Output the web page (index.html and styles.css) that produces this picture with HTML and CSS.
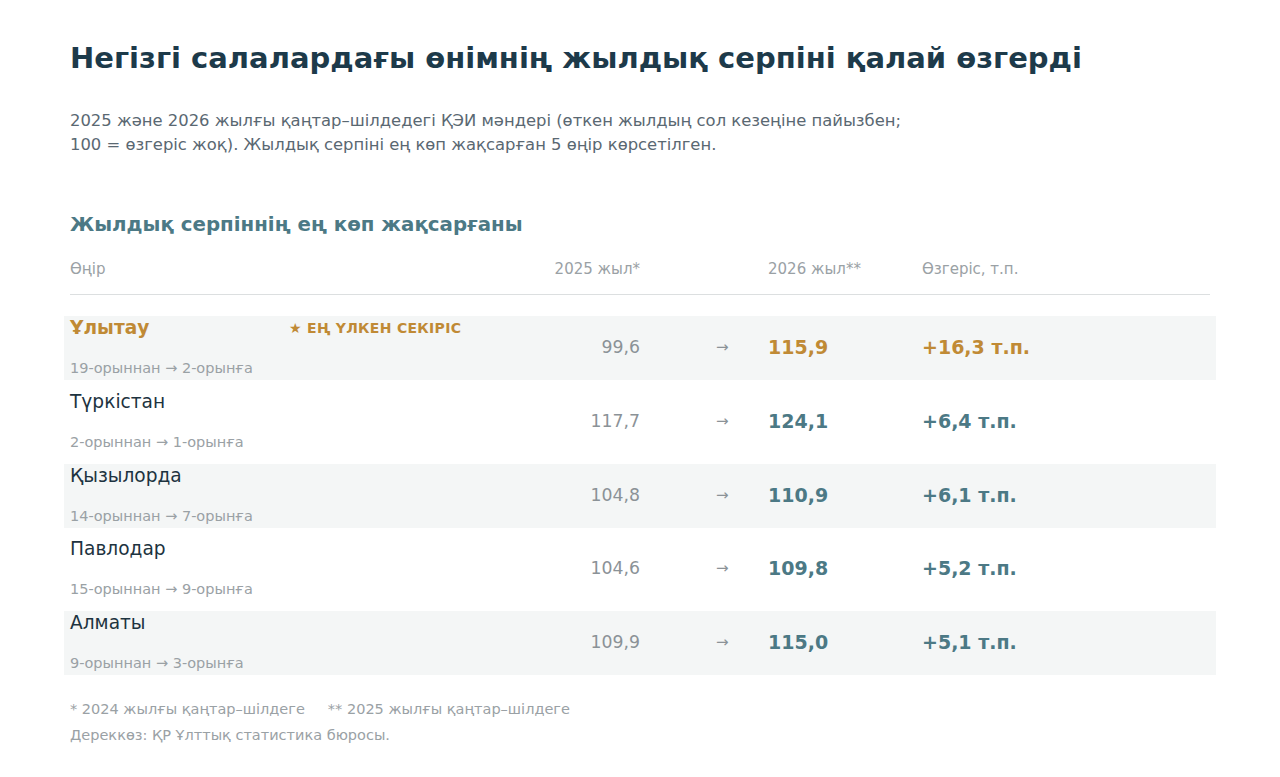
FILE: index.html
```html
<!DOCTYPE html>
<html lang="kk">
<head>
<meta charset="utf-8">
<title>Негізгі салалардағы өнімнің жылдық серпіні</title>
<link rel="stylesheet" href="styles.css">
</head>
<body>
<main class="page">
  <h1 class="title">Негізгі салалардағы өнімнің жылдық серпіні қалай өзгерді</h1>
  <p class="lead">2025 және 2026 жылғы қаңтар–шілдедегі ҚЭИ мәндері (өткен жылдың сол кезеңіне пайызбен;<br>100 = өзгеріс жоқ). Жылдық серпіні ең көп жақсарған 5 өңір көрсетілген.</p>

  <h2 class="section">Жылдық серпіннің ең көп жақсарғаны</h2>

  <div class="table">
    <div class="thead">
      <span class="h-name">Өңір</span>
      <span class="h-prev">2025 жыл*</span>
      <span class="h-cur">2026 жыл**</span>
      <span class="h-diff">Өзгеріс, т.п.</span>
    </div>

    <div class="row shade top">
      <span class="name">Ұлытау</span>
      <span class="badge">★ ЕҢ ҮЛКЕН СЕКІРІС</span>
      <span class="rank">19-орыннан → 2-орынға</span>
      <span class="prev">99,6</span>
      <span class="arrow">→</span>
      <span class="cur">115,9</span>
      <span class="diff">+16,3 т.п.</span>
    </div>

    <div class="row">
      <span class="name">Түркістан</span>
      <span class="rank">2-орыннан → 1-орынға</span>
      <span class="prev">117,7</span>
      <span class="arrow">→</span>
      <span class="cur">124,1</span>
      <span class="diff">+6,4 т.п.</span>
    </div>

    <div class="row shade">
      <span class="name">Қызылорда</span>
      <span class="rank">14-орыннан → 7-орынға</span>
      <span class="prev">104,8</span>
      <span class="arrow">→</span>
      <span class="cur">110,9</span>
      <span class="diff">+6,1 т.п.</span>
    </div>

    <div class="row">
      <span class="name">Павлодар</span>
      <span class="rank">15-орыннан → 9-орынға</span>
      <span class="prev">104,6</span>
      <span class="arrow">→</span>
      <span class="cur">109,8</span>
      <span class="diff">+5,2 т.п.</span>
    </div>

    <div class="row shade">
      <span class="name">Алматы</span>
      <span class="rank">9-орыннан → 3-орынға</span>
      <span class="prev">109,9</span>
      <span class="arrow">→</span>
      <span class="cur">115,0</span>
      <span class="diff">+5,1 т.п.</span>
    </div>
  </div>

  <footer class="notes">
    <p class="note"><span class="note-a">* 2024 жылғы қаңтар–шілдеге</span><span>** 2025 жылғы қаңтар–шілдеге</span></p>
    <p class="note">Дереккөз: ҚР Ұлттық статистика бюросы.</p>
  </footer>
</main>
</body>
</html>
```

FILE: styles.css
```css
* { box-sizing: border-box; }

html, body {
  margin: 0;
  padding: 0;
  background: #ffffff;
}

body {
  font-family: "DejaVu Sans", "Noto Sans", sans-serif;
  color: #1d3a4a;
}

.page {
  padding: 38px 64px 0 70px;
}

.title {
  margin: 0;
  font-size: 29px;
  line-height: 40px;
  font-weight: 700;
  color: #1d3a4a;
}

.lead {
  margin: 31px 0 0;
  font-size: 16.4px;
  line-height: 24px;
  color: #5a6872;
}

.section {
  margin: 55px 0 0;
  font-size: 19.8px;
  line-height: 26px;
  font-weight: 700;
  color: #4c7985;
}

.table {
  margin: 21px 0 0 -6px;
}

.thead,
.row {
  display: grid;
  grid-template-columns: 219px 211px 140px 128px 154px 1fr;
  padding: 0 6px;
}

.thead {
  font-size: 15px;
  line-height: 20px;
  color: #9aa1a5;
  padding: 0 0 15px;
  margin: 0 6px 21px;
  border-bottom: 1px solid #dcdfe0;
}

.h-name { grid-column: 1; }
.h-prev { grid-column: 3; text-align: right; }
.h-cur { grid-column: 5; }
.h-diff { grid-column: 6; }

.row {
  grid-template-rows: 24px 18px 20px;
  height: 64px;
  padding-bottom: 2px;
  margin-bottom: 9.75px;
  align-items: center;
}

.shade {
  background: #f4f6f6;
}

.name {
  grid-column: 1;
  grid-row: 1;
  font-size: 18.6px;
  line-height: 24px;
  color: #1d3340;
}

.badge {
  grid-column: 2;
  grid-row: 1;
  font-size: 14px;
  font-weight: 700;
  letter-spacing: 0.3px;
  color: #c08a35;
}

.rank {
  grid-column: 1 / 3;
  grid-row: 3;
  font-size: 14.5px;
  line-height: 20px;
  color: #9aa1a5;
}

.prev {
  grid-column: 3;
  grid-row: 1 / 4;
  text-align: right;
  font-size: 17.3px;
  color: #8b9297;
}

.arrow {
  grid-column: 4;
  grid-row: 1 / 4;
  padding-left: 76px;
  font-size: 15px;
  color: #8b9297;
}

.cur {
  grid-column: 5;
  grid-row: 1 / 4;
  font-size: 19px;
  font-weight: 700;
  color: #4c7985;
}

.diff {
  grid-column: 6;
  grid-row: 1 / 4;
  font-size: 19px;
  font-weight: 700;
  color: #4c7985;
}

.top .name {
  font-weight: 700;
  color: #c08a35;
}

.top .cur,
.top .diff {
  color: #c08a35;
}

.notes {
  margin-top: 21px;
}

.note {
  margin: 0;
  font-size: 14.5px;
  line-height: 26px;
  color: #9aa1a5;
}

.note-a {
  margin-right: 23px;
}
```
